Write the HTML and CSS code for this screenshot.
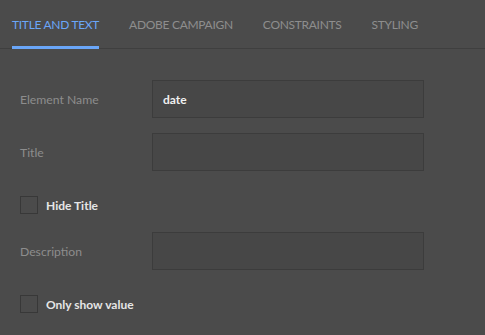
FILE: index.html
```html
<!DOCTYPE html>
<html>
<head>
<meta charset="utf-8">
<link rel="stylesheet" href="styles.css">
</head>
<body>
<div class="tabs">
  <div class="tab active">TITLE AND TEXT</div>
  <div class="tab">ADOBE CAMPAIGN</div>
  <div class="tab">CONSTRAINTS</div>
  <div class="tab">STYLING</div>
</div>
<div class="form">
  <div class="row">
    <div class="label">Element Name</div>
    <div class="input">date</div>
  </div>
  <div class="row row-gap">
    <div class="label">Title</div>
    <div class="input"></div>
  </div>
  <div class="check check-first">
    <span class="box"></span>
    <span class="check-label">Hide Title</span>
  </div>
  <div class="row">
    <div class="label">Description</div>
    <div class="input"></div>
  </div>
  <div class="check check-last">
    <span class="box"></span>
    <span class="check-label">Only show value</span>
  </div>
</div>
</body>
</html>
```

FILE: styles.css
```css
html, body {
  margin: 0;
  padding: 0;
  background: #4b4b4b;
  font-family: Lato, "Open Sans", sans-serif;
  font-size: 12px;
}
.tabs {
  display: flex;
  gap: 30px;
  padding-left: 12px;
  height: 48px;
  border-bottom: 1px solid #3f3f3f;
}
.tab {
  box-sizing: border-box;
  height: 49px;
  margin-bottom: -1px;
  padding-top: 16px;
  line-height: 17px;
  font-size: 12px;
  letter-spacing: -0.3px;
  color: #8e8e8e;
  border-bottom: 3px solid transparent;
}
.tab.active {
  color: #6aa6f8;
  border-bottom-color: #6aa6f8;
}
.form {
  display: flex;
  flex-direction: column;
  padding: 31px 0 0 20px;
}
.row {
  display: flex;
  align-items: center;
}
.row-gap {
  margin-top: 15px;
}
.label {
  width: 132px;
  color: #8d8d8d;
  font-size: 12.2px;
}
.input {
  box-sizing: border-box;
  width: 272px;
  height: 38px;
  background: #474747;
  border: 1px solid #3c3c3c;
  padding-left: 10px;
  display: flex;
  align-items: center;
  color: #f0f0f0;
  font-weight: bold;
}
.check {
  display: flex;
  align-items: center;
  gap: 8px;
  height: 18px;
}
.check-first {
  margin-top: 25px;
  margin-bottom: 18px;
}
.check-last {
  margin-top: 25px;
}
.box {
  box-sizing: border-box;
  width: 18px;
  height: 18px;
  border: 1px solid #383838;
  background: #4b4b4b;
}
.check-label {
  color: #e6e6e6;
  font-weight: bold;
}
```
